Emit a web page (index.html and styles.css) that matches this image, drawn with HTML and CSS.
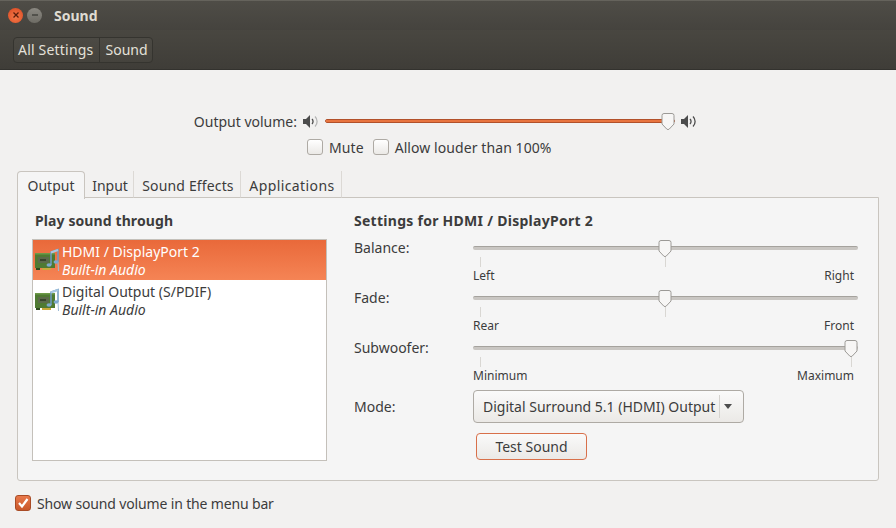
FILE: index.html
```html
<!DOCTYPE html>
<html lang="en">
<head>
    <meta charset="UTF-8">
    <title>Sound</title>
    <link rel="stylesheet" href="styles.css">
</head>
<body>

<svg class="defs" width="0" height="0">
    <symbol id="thumb" viewBox="0 0 14 18">
        <path d="M3 .5h8a2 2 0 0 1 2 2v8.500l-4.700 5a1.800 1.800 0 0 1-2.600 0L1 11V2.500a2 2 0 0 1 2-2z" fill="#f7f6f5" stroke="#9c9a96"/>
    </symbol>
    <symbol id="card" viewBox="0 0 24 24">
        <rect x="0" y="5" width="20" height="15" fill="#4f7a32"/>
        <rect x="0" y="5" width="20" height="1.500" fill="#6d9a48"/>
        <rect x="3" y="9" width="11" height="6" fill="#5b6a4a"/>
        <rect x="5" y="11" width="6" height="2" fill="#38452c"/>
        <rect x="1" y="20" width="4" height="2" fill="#2f4a20"/>
        <rect x="7" y="20" width="9" height="2" fill="#c9a93a"/>
        <path d="M16 17V4l7-2.500V14" fill="none" stroke="#6f9cc4" stroke-width="1.500"/>
        <path d="M16 4.500l7-2.500" fill="none" stroke="#a9c8e2" stroke-width="2.200"/>
        <path d="M23 14l.5 9" fill="none" stroke="#9dbbd4"/>
        <ellipse cx="14" cy="17" rx="2.500" ry="1.800" fill="#7ea9cd"/>
        <ellipse cx="21" cy="14" rx="2.500" ry="1.800" fill="#7ea9cd"/>
    </symbol>
</svg>

<header class="topbar">
    <div class="titlebar">
        <span class="win-btn close">
            <svg width="8" height="8" viewBox="0 0 8 8"><path d="M1.500 1.500l5 5m0-5l-5 5" stroke="#5a1d0c" stroke-width="1.300"/></svg>
        </span>
        <span class="win-btn minimize">
            <svg width="8" height="8" viewBox="0 0 8 8"><path d="M1 4h6" stroke="#3c3b37" stroke-width="1.300"/></svg>
        </span>
        <span class="win-title">Sound</span>
    </div>
    <div class="toolbar">
        <div class="crumbs">
            <span class="crumb">All Settings</span>
            <span class="crumb">Sound</span>
        </div>
    </div>
</header>

<main class="content">
    <div class="volume-row">
        <span class="volume-label">Output volume:</span>
        <svg class="speaker" width="15" height="13" viewBox="0 0 15 13">
            <path d="M0 4h3l4-4v13L3 9H0z" fill="#4c4c4c"/>
            <path d="M9 4a3.500 3.500 0 0 1 0 5" fill="none" stroke="#4c4c4c" stroke-width="1.300"/>
            <path d="M12 1.500a7 7 0 0 1 0 10" fill="none" stroke="#b5b5b5" stroke-width="1.300"/>
        </svg>
        <div class="volume-slider">
            <div class="track-fill"></div>
            <svg class="thumb" style="left: 335px" width="14" height="18"><use href="#thumb"/></svg>
        </div>
        <svg class="speaker" width="15" height="13" viewBox="0 0 15 13">
            <path d="M0 4h3l4-4v13L3 9H0z" fill="#4c4c4c"/>
            <path d="M9 4a3.500 3.500 0 0 1 0 5" fill="none" stroke="#4c4c4c" stroke-width="1.300"/>
            <path d="M12 1.500a7 7 0 0 1 0 10" fill="none" stroke="#4c4c4c" stroke-width="1.300"/>
        </svg>
    </div>

    <div class="check-row">
        <label class="check"><span class="box"></span>Mute</label>
        <label class="check"><span class="box"></span>Allow louder than 100%</label>
    </div>

    <div class="tabs">
        <span class="tab active">Output</span>
        <span class="tab tab-input">Input</span>
        <span class="tab tab-effects">Sound Effects</span>
        <span class="tab tab-apps">Applications</span>
    </div>

    <section class="panel">
        <div class="left-col">
            <h2>Play sound through</h2>
            <ul class="device-list">
                <li class="device selected">
                    <svg width="24" height="24"><use href="#card"/></svg>
                    <div>
                        <div>HDMI / DisplayPort 2</div>
                        <div class="device-sub">Built-in Audio</div>
                    </div>
                </li>
                <li class="device">
                    <svg width="24" height="24"><use href="#card"/></svg>
                    <div>
                        <div>Digital Output (S/PDIF)</div>
                        <div class="device-sub">Built-in Audio</div>
                    </div>
                </li>
            </ul>
        </div>

        <div class="right-col">
            <h2>Settings for HDMI / DisplayPort 2</h2>

            <div class="setting">
                <span class="setting-label">Balance:</span>
                <div class="scale">
                    <div class="scale-track"></div>
                    <svg class="thumb" style="left: 185px" width="14" height="18"><use href="#thumb"/></svg>
                    <span class="tick" style="left: 7px"></span>
                    <span class="tick" style="left: 192px"></span>
                    <div class="scale-ends"><span>Left</span><span>Right</span></div>
                </div>
            </div>

            <div class="setting">
                <span class="setting-label">Fade:</span>
                <div class="scale">
                    <div class="scale-track"></div>
                    <svg class="thumb" style="left: 185px" width="14" height="18"><use href="#thumb"/></svg>
                    <span class="tick" style="left: 7px"></span>
                    <span class="tick" style="left: 192px"></span>
                    <div class="scale-ends"><span>Rear</span><span>Front</span></div>
                </div>
            </div>

            <div class="setting">
                <span class="setting-label">Subwoofer:</span>
                <div class="scale">
                    <div class="scale-track"></div>
                    <svg class="thumb" style="left: 371px" width="14" height="18"><use href="#thumb"/></svg>
                    <span class="tick" style="left: 7px"></span>
                    <span class="tick" style="left: 378px"></span>
                    <div class="scale-ends"><span>Minimum</span><span>Maximum</span></div>
                </div>
            </div>

            <div class="mode-row">
                <span class="setting-label">Mode:</span>
                <div class="combo">
                    <span class="combo-text">Digital Surround 5.1 (HDMI) Output</span>
                    <span class="combo-arrow"></span>
                </div>
            </div>

            <button class="test-btn" type="button">Test Sound</button>
        </div>
    </section>

    <label class="check menu-check">
        <span class="box checked">
            <svg width="14" height="14" viewBox="0 0 14 14"><path d="M3 7l3 3.500L11.500 3" fill="none" stroke="#fff" stroke-width="2.200"/></svg>
        </span>
        Show sound volume in the menu bar
    </label>
</main>

</body>
</html>
```

FILE: styles.css
```css
* {
    box-sizing: border-box;
}

html, body {
    height: 100%;
}

body {
    margin: 0;
    font-family: "Noto Sans", "Open Sans", sans-serif;
    font-size: 14px;
    color: #3c3c3c;
    background-color: #f2f1f0;
    overflow: hidden;
}

.defs {
    display: block;
    height: 0;
}

/* window header */
.topbar {
    height: 70px;
    background: linear-gradient(#504e47, #3f3d38);
    border-bottom: 1px solid #33322e;
}

.titlebar {
    height: 30px;
    display: flex;
    align-items: center;
    padding-left: 8px;
    background: linear-gradient(#4f4d47, #45433e);
    box-shadow: inset 0 1px 0 #65635c;
}

.win-btn {
    width: 15px;
    height: 15px;
    border-radius: 50%;
    display: flex;
    align-items: center;
    justify-content: center;
    margin-right: 4px;
}

.close {
    background: radial-gradient(circle at 50% 60%, #f47a4a, #d9461f);
}

.minimize {
    background: linear-gradient(#8a8881, #6e6c65);
}

.win-title {
    margin-left: 8px;
    font-size: 14px;
    font-weight: 700;
    color: #dfdbd2;
}

.toolbar {
    height: 39px;
    padding: 7px 13px 0;
}

.crumbs {
    display: inline-flex;
    height: 26px;
    border: 1px solid #35342f;
    border-radius: 4px;
    background: linear-gradient(#4c4a44, #45433d);
}

.crumb {
    padding: 0 6px 0 4px;
    line-height: 24px;
    letter-spacing: .2px;
    color: #e4e1da;
}

.crumb + .crumb {
    border-left: 1px solid #35342f;
    padding: 0 4px 0 5px;
    letter-spacing: 0;
}

/* volume area */
.content {
    position: relative;
    padding: 0 17px;
}

.volume-row {
    display: flex;
    align-items: center;
    height: 20px;
    margin-top: 41px;
    padding-left: 176px;
}

.volume-label {
    width: 104px;
    text-align: right;
    white-space: nowrap;
}

.speaker {
    margin: 0 7px 0 6px;
}

.volume-slider {
    position: relative;
    width: 350px;
    height: 4px;
    background-color: #d9683a;
    border: 1px solid #b2512a;
    border-radius: 2px;
}

.volume-slider .thumb {
    top: -7px;
}

.track-fill {
    height: 100%;
    background-color: #e8743f;
}

.thumb {
    position: absolute;
}

.check-row {
    display: flex;
    height: 20px;
    margin-top: 6px;
    padding-left: 290px;
    gap: 9px;
    letter-spacing: .08px;
}

.check {
    display: inline-flex;
    align-items: center;
    white-space: nowrap;
}

.box {
    width: 16px;
    height: 16px;
    margin-right: 6px;
    border: 1px solid #aeaaa4;
    border-radius: 3px;
    background: linear-gradient(#ffffff, #ebe9e6);
    display: inline-flex;
    align-items: center;
    justify-content: center;
}

.box.checked {
    background: linear-gradient(#e8794b, #c9572a);
    border-color: #a94b25;
}

/* tabs */
.tabs {
    position: relative;
    z-index: 1;
    display: flex;
    height: 27px;
    margin-top: 14px;
}

.tab {
    padding: 5px 0 0 2px;
    border-right: 1px solid #dcd9d5;
    border-bottom: 1px solid #c9c5bf;
    text-align: center;
    white-space: nowrap;
}

.tab.active {
    width: 68px;
    height: 28px;
    padding: 4px 0 0;
    background-color: #f5f5f5;
    border: 1px solid #c9c5bf;
    border-bottom: 0;
    border-radius: 4px 4px 0 0;
}

.tab-input {
    width: 49px;
}

.tab-effects {
    width: 107px;
    letter-spacing: .15px;
}

.tab-apps {
    width: 101px;
    letter-spacing: .4px;
}

.panel {
    display: flex;
    height: 284px;
    margin-top: -1px;
    padding: 13px 0 0 14px;
    background-color: #f5f5f5;
    border: 1px solid #c9c5bf;
    border-radius: 0 0 3px 3px;
}

h2 {
    margin: 0;
    font-size: 14px;
    font-weight: 700;
    line-height: 20px;
    letter-spacing: .27px;
}

.left-col {
    width: 322px;
}

.left-col h2 {
    padding-left: 3px;
    margin-bottom: 8px;
    letter-spacing: .1px;
}

.device-list {
    width: 295px;
    height: 222px;
    margin: 0;
    padding: 0;
    list-style: none;
    background-color: #fff;
    border: 1px solid #c4c0ba;
}

.device {
    display: flex;
    height: 40px;
    padding-left: 2px;
    align-items: center;
    gap: 3px;
    line-height: 19px;
    white-space: nowrap;
}

.device.selected {
    color: #fff;
    background: linear-gradient(#e9693a, #f58455);
}

.device-sub {
    font-style: italic;
    margin-top: -1px;
}

.right-col {
    width: 505px;
}

.right-col h2 {
    margin-bottom: 8px;
}

.setting {
    display: flex;
    height: 50px;
}

.setting-label {
    width: 119px;
    line-height: 18px;
}

.scale {
    position: relative;
    width: 385px;
}

.scale-track {
    position: absolute;
    top: 7px;
    left: 0;
    right: 0;
    height: 4px;
    border-radius: 2px;
    background-color: #c9c6c2;
    border-top: 1px solid #a5a29d;
}

.scale .thumb {
    top: 1px;
}

.tick {
    position: absolute;
    top: 18px;
    width: 1px;
    height: 10px;
    background-color: #d9d7d3;
}

.scale-ends {
    position: absolute;
    top: 29px;
    left: 0;
    right: 4px;
    display: flex;
    justify-content: space-between;
    font-size: 12px;
    line-height: 16px;
}

.mode-row {
    display: flex;
    align-items: center;
    height: 33px;
    margin-top: 1px;
}

.combo {
    display: flex;
    align-items: center;
    width: 271px;
    height: 33px;
    padding-left: 9px;
    border: 1px solid #aeaaa4;
    border-radius: 4px;
    background: linear-gradient(#fafafa, #ebe9e6);
    white-space: nowrap;
}

.combo-text {
    width: 237px;
    height: 23px;
    line-height: 23px;
    border-right: 1px solid #d5d3cf;
}

.combo-arrow {
    width: 0;
    height: 0;
    margin-left: 4px;
    border-left: 4px solid transparent;
    border-right: 4px solid transparent;
    border-top: 5px solid #4c4c4c;
}

.test-btn {
    display: block;
    width: 111px;
    height: 27px;
    margin: 10px 0 0 122px;
    padding: 0;
    font: inherit;
    color: inherit;
    border: 1px solid #d8704a;
    border-radius: 4px;
    background: linear-gradient(#fafafa, #ebe9e6);
}

.menu-check {
    display: flex;
    height: 18px;
    margin: 13px 0 0 -2px;
    letter-spacing: -.15px;
}
```
